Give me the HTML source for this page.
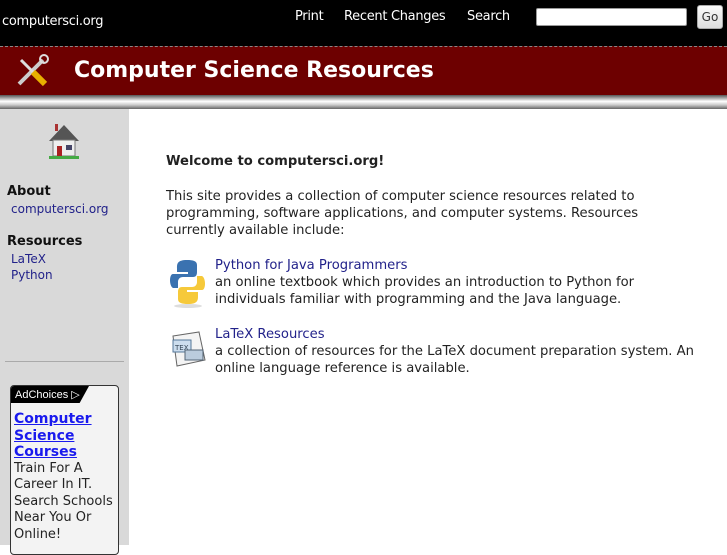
<!DOCTYPE html>
<html><head><style>
*{margin:0;padding:0;box-sizing:border-box}
body{width:727px;height:545px;overflow:hidden;font-family:"DejaVu Sans","Liberation Sans",sans-serif;background:#fff;position:relative}
.top{position:absolute;left:0;top:0;width:727px;height:46px;background:#000;color:#fff}
.top .site{position:absolute;left:2px;top:14px;font-size:13px;letter-spacing:-0.3px}
.top .nav{position:absolute;top:9px;font-size:13px;letter-spacing:-0.3px}
.top input{position:absolute;left:536px;top:8px;width:151px;height:18px;background:#fff;border:1px solid #999;border-radius:2px}
.go{position:absolute;left:697px;top:5px;width:26px;height:24px;background:linear-gradient(#fafafa,#ddd);border:1px solid #aaa;border-radius:3px;color:#333;font-size:12px;text-align:center;line-height:22px}
.band{position:absolute;left:0;top:46px;width:727px;height:49px;background:#6d0000;border-top:1px dashed #888}
.band h1{position:absolute;left:74px;top:11px;color:#fff;font-size:22px;font-weight:bold}
.bar{position:absolute;left:0;top:95px;width:727px;height:14px;background:linear-gradient(#555,#fff 45%,#ccc 70%,#666)}
.side{position:absolute;left:0;top:109px;width:129px;height:436px;background:#d9d9d9}
.side h3{font-size:13px;font-weight:bold;color:#111;position:absolute;left:7px}
.side a,.main a{color:#22228a;text-decoration:none}
.side .l{position:absolute;left:11px;font-size:12px}
.ad{position:absolute;left:10px;top:276px;width:109px;height:170px;background:#f3f3f3;border:1px solid #333;border-radius:4px;overflow:hidden}
.adc{background:#000;color:#fff;font-family:"Liberation Sans",sans-serif;font-size:11px;height:17px;width:78px;padding:2px 4px;clip-path:polygon(0 0,100% 0,88% 100%,0 100%)}
.ad .t{font-size:14px;font-weight:bold;color:#1a1aee;text-decoration:underline;line-height:16.5px;padding:8px 0 0 3px}
.ad .d{font-size:13px;color:#222;line-height:16.5px;padding-left:3px}
.main{position:absolute;left:166px;top:0;width:550px;font-size:13.15px;color:#222;line-height:17px}
</style></head><body>
<div class="top">
<div class="site">computersci.org</div>
<div class="nav" style="left:295px">Print</div>
<div class="nav" style="left:344px">Recent Changes</div>
<div class="nav" style="left:467px">Search</div>
<input>
<div class="go">Go</div>
</div>
<div class="band">
<svg style="position:absolute;left:15px;top:7px" width="36" height="34" viewBox="0 0 36 34">
<path d="M4 30 L28 6" stroke="#ccc" stroke-width="4"/><circle cx="29" cy="5" r="4" fill="none" stroke="#ddd" stroke-width="2"/>
<path d="M6 6 L20 20" stroke="#ddd" stroke-width="3"/><path d="M18 18 L30 30" stroke="#e8b000" stroke-width="6"/>
</svg>
<h1>Computer Science Resources</h1>
</div>
<div class="bar"></div>
<div class="side">
<svg style="position:absolute;left:45px;top:12px" width="38" height="40" viewBox="0 0 38 40">
<polygon points="4,20 19,4 34,20" fill="#555"/><rect x="8" y="19" width="22" height="16" fill="#eee" stroke="#777"/>
<rect x="12" y="25" width="5" height="10" fill="#a22"/><rect x="21" y="24" width="6" height="5" fill="#446"/>
<rect x="10" y="3" width="3" height="7" fill="#a33"/><rect x="4" y="35" width="30" height="3" fill="#4a4"/>
</svg>
<h3 style="top:75px">About</h3>
<a class="l" style="top:93px">computersci.org</a>
<h3 style="top:125px">Resources</h3>
<a class="l" style="top:143px">LaTeX</a>
<a class="l" style="top:159px">Python</a>
<div style="position:absolute;left:5px;top:252px;width:119px;height:1px;background:#aaa"></div>
<div class="ad"><div class="adc">AdChoices ▷</div>
<div class="t">Computer<br>Science<br>Courses</div>
<div class="d">Train For A Career In IT. Search Schools Near You Or Online!</div></div>
</div>
<div class="main">
<div style="position:absolute;top:153px;font-weight:bold">Welcome to computersci.org!</div>
<div style="position:absolute;top:188px;width:500px">This site provides a collection of computer science resources related to programming, software applications, and computer systems. Resources currently available include:</div>
<svg style="position:absolute;left:3px;top:258px" width="38" height="50" viewBox="0 0 38 50">
<path d="M18 2 C8 2 8 6 8 10 V14 H19 V16 H4 C0 16 0 28 4 30 H9 V24 C9 21 11 19 14 19 H24 C27 19 28 17 28 14 V7 C28 3 24 2 18 2Z" fill="#3a72b0"/>
<path d="M19 46 C29 46 29 42 29 38 V34 H18 V32 H33 C37 32 37 20 33 18 H28 V24 C28 27 26 29 23 29 H13 C10 29 9 31 9 34 V41 C9 45 13 46 19 46Z" fill="#f6c93a"/>
<ellipse cx="19" cy="48" rx="14" ry="2" fill="#ddd"/></svg>
<a style="position:absolute;left:49px;top:257px">Python for Java Programmers</a>
<div style="position:absolute;left:49px;top:274px;width:440px">an online textbook which provides an introduction to Python for individuals familiar with programming and the Java language.</div>
<svg style="position:absolute;left:3px;top:330px" width="40" height="38" viewBox="0 0 40 38">
<polygon points="4,6 30,2 36,30 8,36" fill="#f4f4f4" stroke="#666"/><rect x="4" y="10" width="18" height="12" fill="#cde" stroke="#579"/>
<text x="6" y="20" font-size="7" fill="#345" font-family="DejaVu Sans">TEX</text><rect x="16" y="20" width="18" height="10" fill="#bcd" stroke="#567"/></svg>
<a style="position:absolute;left:49px;top:326px">LaTeX Resources</a>
<div style="position:absolute;left:49px;top:343px;width:500px">a collection of resources for the LaTeX document preparation system. An online language reference is available.</div>
</div>
</body></html>
